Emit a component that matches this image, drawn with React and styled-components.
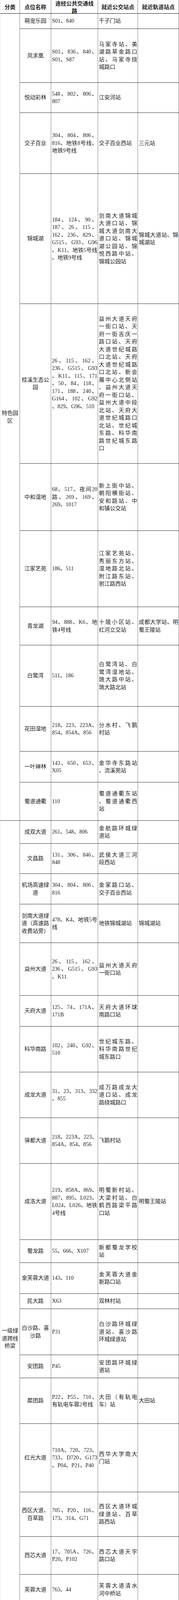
import React from 'react';
import styled, { createGlobalStyle } from 'styled-components';

const GlobalStyle = createGlobalStyle`
  html, body {
    margin: 0;
    padding: 0;
    background: #fff;
  }
  body {
    font-family: "Liberation Serif", "Noto Sans CJK SC", serif;
    text-autospace: no-autospace;
    text-spacing-trim: space-all;
  }
  * {
    box-sizing: border-box;
  }
`;

const HEAD_HEIGHT = 35;

const headers = ['分类', '点位名称', '途经公共交通线|路', '就近公交站点', '就近轨道站点'];

// [name, row height, routes, nearest bus stops, nearest rail stations]; "|" marks a line break
const groups = [
  {
    label: '特色园|区',
    rows: [
      ['萌宠乐园', 39, 'S01、840', '千子门站', ''],
      ['凤求凰', 138, 'S01、836、840、|S01、S87', '马家寺站、美|湖路草金路口|站、马家寺绕|城路口', ''],
      ['悦动彩林', 77, '548、802、806、|807', '江安河站', ''],
      ['交子百业', 156, '304、804、806、|816、地铁8号线、|地铁9号线', '交子百业西站', '三元站'],
      ['锦城湖', 333, '184、124、90、|187、26、115、|162、236、829、|G515、G93、G96|、K11、地铁5号线|、地铁9号线', '剑南大道锦城|大道口站、锦|城大道剑南大|道口站、锦城|湖公园站、锦|悦西路中站、|锦城公园站', '锦城大道站、锦|城湖站'],
      ['桂溪生态公|园', 409, '26、115、162、|236、G515、G93|、K11、115、171|、50、84、118、|171、188、240、|G164、102、G92|、829、G96、510', '益州大道天府|一街口站、天|府一街吉庆一|路口站、天府|大道世纪城路|口北站、天府|大道世纪城路|口北站、新会|展中心北侧站|、益州大道天|府一街口站、|益州大道中段|北站、天府大|道世纪城路口|北站、世纪城|东路、科华南|路世纪城东路|口', ''],
      ['中和湿地', 172, '68、517、夜间20|路、269、169、|269、1017', '新上街中站、|朝阳横街站、|安和路站、中|和镇公交站', ''],
      ['江家艺苑', 195, '186、511', '江家艺苑站、|秀丽东方站、|湿地路北站、|附江路东站、|驸江路西站', ''],
      ['青龙湖', 98, '94、888、K6、地|铁4号线', '十陵小区站、|红河立交站', '成都大学站、明|蜀王陵站'],
      ['白鹭湾', 157, '511、186', '白鹭湾站、白|鹭湾湿地站、|琉大路中站、|琉大路北站', ''],
      ['花田湿地', 115, '218、223、223A、|854、854A、856', '分水村、飞鹅|村站', ''],
      ['一叶禅林', 79, '143、650、653、|X05', '金华寺东路站|、流溪苑站', ''],
      ['蜀道通衢', 98, '110', '蜀道通衢东站|、蜀道通衢西|站', ''],
    ],
  },
  {
    label: '一级绿|道跨线|桥梁',
    rows: [
      ['成双大道', 59, '261、548、806', '金航路环城绿|道站', ''],
      ['文昌路', 77, '131、306、846、|848', '武侯大道三河|段西站', ''],
      ['机场高速绿|道', 78, '304、804、806、|816', '金家路口站、|交子百业西站', ''],
      ['剑南大道绿|道（高速路|收费站旁）', 99, '478、K4、地铁5号|线', '地铁锦城湖站', '锦城湖站'],
      ['益州大道', 135, '26、115、162、|236、G515、G93|、K11', '益州大道天府|一街口站', ''],
      ['天府大道', 79, '125、74、171A、|171B', '天府大道环球|南路口站', ''],
      ['科华南路', 117, '102、240、G92、|510', '世纪城东路、|科华南路世纪|城东路口', ''],
      ['成龙大道', 117, '31、23、313、332|、855', '成万路成龙大|道口站、成龙|路绕城路口', ''],
      ['驿都大道', 117, '218、223A、223、|854A、854、856', '飞鹅村站', ''],
      ['成洛大道', 195, '219、858A、869、|887、895、L023、|L024、L026、地铁|4号线', '明蜀新村站、|大梁村站、白|鹤西路梁平路|口站', '明蜀王陵站'],
      ['蜀龙路', 59, '55、666、X107', '新都蜀龙学校|站', ''],
      ['金芙蓉大道', 79, '143、110', '金芙蓉大道金|新路口站', ''],
      ['民大路', 39, 'X63', '双林村站', ''],
      ['白沙路、喜|沙路', 118, 'P31', '白沙路环城绿|道站、喜沙路|环城绿道站', ''],
      ['安团路', 59, 'P45', '安团路环城绿|道站', ''],
      ['犀团路', 117, 'P22、P55、710、|有轨电车蓉2号线', '大田（有轨电|车）站', '大田站'],
      ['红光大道', 175, '710A、720、723、|733、D720、G173|、P04、P21、P40', '西华大学南大|门站', ''],
      ['西区大道、|百草路', 114, '705、P20、116、|173、314、G71', '西区大道环城|绿道站、百草|路西站', ''],
      ['西芯大道', 97, '17、705A、726、|P20、P102', '西芯大道天宇|路口站', ''],
      ['芙蓉大道', 78, '763、44', '芙蓉大道清水|河中桥站', ''],
      ['土龙路', 60, '29', '土龙路环城绿|道站', ''],
      ['日月大道', 78, 'K5、K5A', '乐大公路南站|、文家路口站', ''],
      ['光华大道', 176, '22、239、309、|319、347、772、|G158、地铁4号线', '光华大道一段|西一站、地铁|蔡桥站', '蔡桥站'],
      ['草金路', 156, 'S01、840、836、|S87', '千子门站、马|家寺绕城路口|站、草金路绕|城绿道站', ''],
      ['成新蒲', 58, '837、844、S28', '变色龙家私站', ''],
      ['双楠大道', 116, '803、368、368A、|10', '双楠大道环城|绿道站、武侯|大道金江路口', ''],
    ],
  },
];

const rowTemplate = [HEAD_HEIGHT, ...groups.flatMap(g => g.rows.map(r => r[1]))]
  .map(h => `${h}px`)
  .join(' ');

const Sheet = styled.div`
  display: grid;
  width: 458px;
  grid-template-columns: 51px 80px 120px 102px 105px;
  grid-template-rows: ${p => p.$rows};
  font-size: 14px;
  line-height: 19.5px;
  color: #222;
`;

const HeadCell = styled.div`
  display: flex;
  flex-direction: column;
  justify-content: center;
  padding-top: 3px;
  font-weight: bold;
  line-height: 19px;
  border-right: 1px solid #808080;
  border-bottom: 1px solid #111;
  border-left: ${p => (p.$first ? '1px solid #e6e6e6' : 'none')};
`;

const Cell = styled.div`
  display: flex;
  flex-direction: column;
  justify-content: center;
  min-width: 0;
  padding: ${p => (p.$center ? '0 1px' : '0 1px 0 2px')};
  border-right: 1px solid #808080;
  border-bottom: 1px solid #333;
  border-left: ${p => (p.$first ? '1px solid #e6e6e6' : 'none')};
`;

const GroupCell = styled(Cell)`
  grid-row: span ${p => p.$span};
`;

const Line = styled.span`
  display: block;
  white-space: nowrap;
  height: 19.5px;
  text-align: ${p => (p.$fill ? 'justify' : p.$align)};
  text-align-last: ${p => (p.$fill ? 'justify' : p.$align)};
`;

const HeadLine = styled(Line)`
  height: 19px;
`;

const Lines = ({ text, align, as }) => {
  if (!text) return null;
  const parts = text.split('|');
  const Tag = as || Line;
  return parts.map((part, i) => (
    <Tag key={i} $align={align} $fill={align !== 'center' && i < parts.length - 1}>
      {part}
    </Tag>
  ));
};

const App = () => (
  <>
    <GlobalStyle />
    <Sheet $rows={rowTemplate}>
      {headers.map((h, i) => (
        <HeadCell key={h} $first={i === 0}>
          <Lines text={h} align="center" as={HeadLine} />
        </HeadCell>
      ))}
      {groups.map(group =>
        group.rows.map((row, i) => {
          const [name, , ...rest] = row;
          return (
            <React.Fragment key={name}>
              {i === 0 && (
                <GroupCell $span={group.rows.length} $center $first>
                  <Lines text={group.label} align="center" />
                </GroupCell>
              )}
              <Cell $center>
                <Lines text={name} align="center" />
              </Cell>
              {rest.map((text, j) => (
                <Cell key={j}>
                  <Lines text={text} align="left" />
                </Cell>
              ))}
            </React.Fragment>
          );
        })
      )}
    </Sheet>
  </>
);

export default App;
